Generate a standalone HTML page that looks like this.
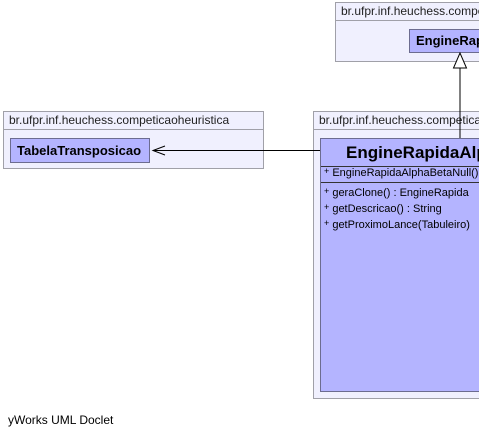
<!DOCTYPE html><html><head><style>
body{margin:0;width:479px;height:437px;background:#fff;position:relative;overflow:hidden;font-family:"Liberation Sans",sans-serif;}
.p{position:absolute;background:#f0f0fe;border:1px solid #a0a0a8;box-sizing:border-box;}
.ph{position:absolute;left:0;right:0;top:0;height:17px;border-bottom:1px solid #a0a0a8;font-size:12px;line-height:16px;padding-left:5px;color:#222;white-space:nowrap;overflow:hidden;}
.c{position:absolute;background:#b4b4ff;border:1px solid #6c6c90;box-sizing:border-box;font-weight:bold;white-space:nowrap;overflow:hidden;}
.t{position:absolute;font-size:11px;white-space:nowrap;color:#000;}
</style></head><body>
<div class="p" style="left:335px;top:2px;width:150px;height:60px"><div class="ph">br.ufpr.inf.heuchess.competicao</div></div>
<div class="c" style="left:409px;top:29px;width:80px;height:24px;font-size:13px;line-height:22px;padding-left:6px">EngineRapida</div>
<div class="p" style="left:3px;top:111px;width:261px;height:58px"><div class="ph">br.ufpr.inf.heuchess.competicaoheuristica</div></div>
<div class="c" style="left:10px;top:138px;width:140px;height:25px;font-size:13px;line-height:23px;padding-left:6px">TabelaTransposicao</div>
<div class="p" style="left:313px;top:111px;width:180px;height:288px"><div class="ph">br.ufpr.inf.heuchess.competicao</div></div>
<div class="c" style="left:320px;top:138px;width:170px;height:254px">
<div style="font-size:17px;line-height:28px;padding-left:25px;border-bottom:1px solid #333;height:27px">EngineRapidaAlphaBeta</div>
<div style="height:15px;border-bottom:1px solid #333"></div>
</div>
<div class="t" style="left:324px;top:167px"><span style="font-size:9px;position:relative;top:-2px">+</span> EngineRapidaAlphaBetaNull()</div>
<div class="t" style="left:324px;top:187px"><span style="font-size:9px;position:relative;top:-2px">+</span> geraClone() : EngineRapida</div>
<div class="t" style="left:324px;top:203px"><span style="font-size:9px;position:relative;top:-2px">+</span> getDescricao() : String</div>
<div class="t" style="left:324px;top:219px"><span style="font-size:9px;position:relative;top:-2px">+</span> getProximoLance(Tabuleiro)</div>
<svg style="position:absolute;left:0;top:0" width="479" height="437">
<line x1="460" y1="68" x2="460" y2="138" stroke="#000"/>
<polygon points="460,53 453.5,68 466.5,68" fill="#fff" stroke="#000"/>
<line x1="153" y1="150.5" x2="320" y2="150.5" stroke="#000"/>
<polyline points="165,146 153,150.5 165,155" fill="none" stroke="#000"/>
</svg>
<div class="t" style="left:8px;top:413px;font-size:12px">yWorks UML Doclet</div>
</body></html>
